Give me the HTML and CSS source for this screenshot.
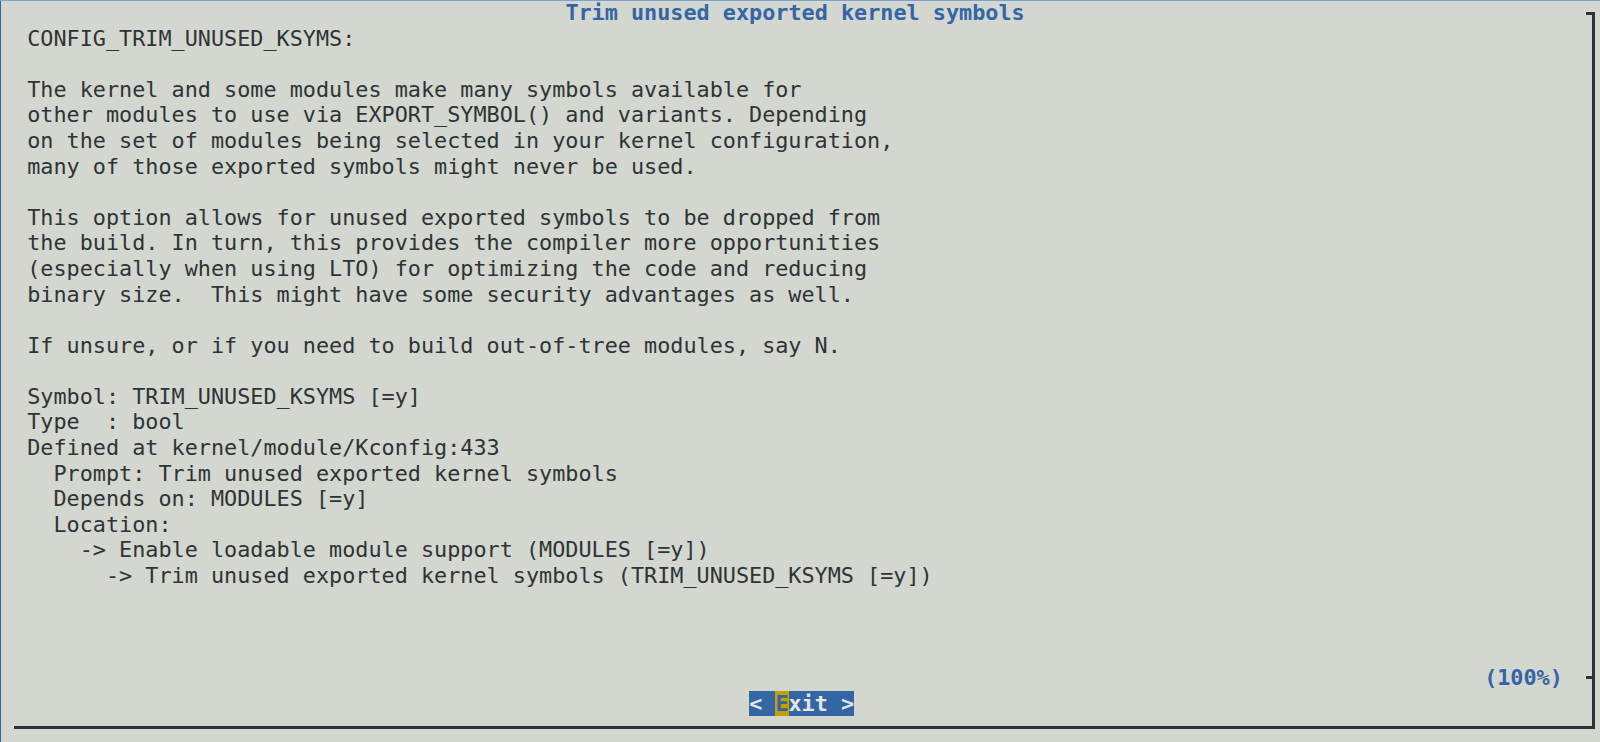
FILE: index.html
```html
<!DOCTYPE html>
<html lang="en">
<head>
<meta charset="utf-8">
<title>Trim unused exported kernel symbols</title>
<link rel="stylesheet" href="styles.css">
</head>
<body>
<div class="screen">
  <div class="frame"></div>
  <h1 class="title">Trim unused exported kernel symbols</h1>
  <pre class="help">CONFIG_TRIM_UNUSED_KSYMS:

The kernel and some modules make many symbols available for
other modules to use via EXPORT_SYMBOL() and variants. Depending
on the set of modules being selected in your kernel configuration,
many of those exported symbols might never be used.

This option allows for unused exported symbols to be dropped from
the build. In turn, this provides the compiler more opportunities
(especially when using LTO) for optimizing the code and reducing
binary size.  This might have some security advantages as well.

If unsure, or if you need to build out-of-tree modules, say N.

Symbol: TRIM_UNUSED_KSYMS [=y]
Type  : bool
Defined at kernel/module/Kconfig:433
  Prompt: Trim unused exported kernel symbols
  Depends on: MODULES [=y]
  Location:
    -&gt; Enable loadable module support (MODULES [=y])
      -&gt; Trim unused exported kernel symbols (TRIM_UNUSED_KSYMS [=y])</pre>
  <div class="percent">(100%)</div>
  <div class="buttons"><span class="btn">&lt; <span class="hot">E</span>xit &gt;</span></div>
</div>
</body>
</html>
```

FILE: styles.css
```css
html, body {
  margin: 0;
  padding: 0;
  background: #d3d7cf;
  overflow: hidden;
}

.screen {
  box-sizing: border-box;
  width: 1600px;
  height: 742px;
  padding-left: 1px;
  overflow: hidden;
  display: grid;
  grid-template-columns: repeat(122, 13.125px);
  grid-template-rows: repeat(29, 25.586px);
  font-family: "DejaVu Sans Mono", "Liberation Mono", monospace;
  font-size: 21.8px;
  line-height: 25.586px;
  color: #2e3436;
  background: #d3d7cf;
  box-shadow: inset 0 1px 0 #7fa2cf, inset 1px 0 0 #3465a4;
}

.frame {
  grid-row: 1 / 30;
  grid-column: 2 / 123;
  margin: 12px 7.25px 13px 0;
  border-right: 3px solid #2e3436;
  border-bottom: 3px solid #2e3436;
  background:
    linear-gradient(#2e3436, #2e3436) right 0 top 0 / 6px 3px no-repeat,
    linear-gradient(#2e3436, #2e3436) right 0 top 664px / 6px 3px no-repeat;
}

.title {
  grid-row: 1;
  grid-column: 44 / span 35;
  margin: 0;
  font-size: inherit;
  font-weight: bold;
  color: #3465a4;
  white-space: pre;
}

.help {
  grid-row: 2 / 27;
  grid-column: 3 / 121;
  margin: 0;
  font: inherit;
  white-space: pre;
}

.percent {
  grid-row: 27;
  grid-column: 114 / span 6;
  font-weight: bold;
  color: #3465a4;
  white-space: pre;
}

.buttons {
  grid-row: 28;
  grid-column: 58 / span 8;
  white-space: pre;
}

.btn {
  display: inline-block;
  background: #3465a4;
  color: #e4e6e1;
  font-weight: bold;
}

.hot {
  background: #c4a000;
  color: #3465a4;
}
```
